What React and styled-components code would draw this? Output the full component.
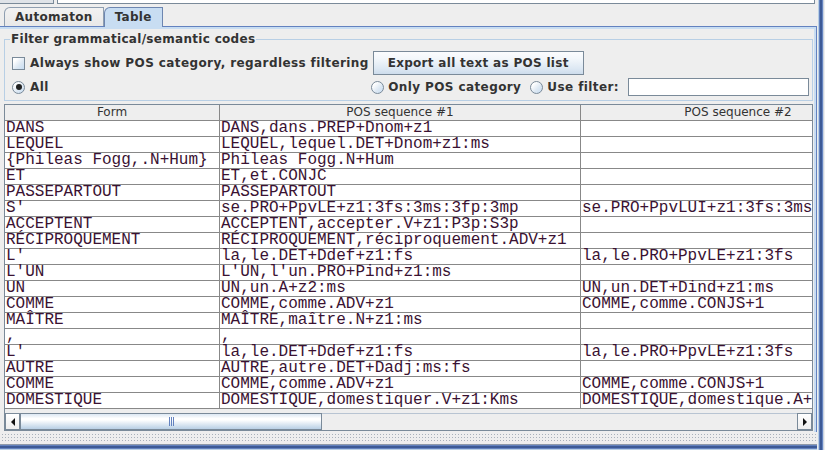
import React from 'react'
import styled, { createGlobalStyle } from 'styled-components'

const GlobalStyle = createGlobalStyle`
  html, body {
    margin: 0;
    padding: 0;
    background: #eeeeee;
  }
  body {
    font-family: "DejaVu Sans", "Liberation Sans", sans-serif;
    font-size: 12px;
    color: #333333;
  }
`

const rows = [
  ['DANS', 'DANS,dans.PREP+Dnom+z1', ''],
  ['LEQUEL', 'LEQUEL,lequel.DET+Dnom+z1:ms', ''],
  ['{Phileas Fogg,.N+Hum}', 'Phileas Fogg.N+Hum', ''],
  ['ET', 'ET,et.CONJC', ''],
  ['PASSEPARTOUT', 'PASSEPARTOUT', ''],
  ["S'", 'se.PRO+PpvLE+z1:3fs:3ms:3fp:3mp', 'se.PRO+PpvLUI+z1:3fs:3ms:3fp:3mp'],
  ['ACCEPTENT', 'ACCEPTENT,accepter.V+z1:P3p:S3p', ''],
  ['RÉCIPROQUEMENT', 'RÉCIPROQUEMENT,réciproquement.ADV+z1', ''],
  ["L'", 'la,le.DET+Ddef+z1:fs', 'la,le.PRO+PpvLE+z1:3fs'],
  ["L'UN", "L'UN,l'un.PRO+Pind+z1:ms", ''],
  ['UN', 'UN,un.A+z2:ms', 'UN,un.DET+Dind+z1:ms'],
  ['COMME', 'COMME,comme.ADV+z1', 'COMME,comme.CONJS+1'],
  ['MAÎTRE', 'MAÎTRE,maître.N+z1:ms', ''],
  [',', ',', ''],
  ["L'", 'la,le.DET+Ddef+z1:fs', 'la,le.PRO+PpvLE+z1:3fs'],
  ['AUTRE', 'AUTRE,autre.DET+Dadj:ms:fs', ''],
  ['COMME', 'COMME,comme.ADV+z1', 'COMME,comme.CONJS+1'],
  ['DOMESTIQUE', 'DOMESTIQUE,domestiquer.V+z1:Kms', 'DOMESTIQUE,domestique.A+z1:ms'],
]

const columns = [
  { title: 'Form', width: 215 },
  { title: 'POS sequence #1', width: 361 },
  { title: 'POS sequence #2', width: 315 },
]

const Window = styled.div`
  width: 825px;
  height: 450px;
  display: flex;
  overflow: hidden;
  background: #eeeeee;
`

const Main = styled.div`
  width: 817px;
  display: flex;
  flex-direction: column;
`

const RightFrame = styled.div`
  width: 8px;
  background: linear-gradient(
    to right,
    #eeeeee 0 1px,
    #b8cfe5 1px 2px,
    #6382bf 2px 3px,
    #3d5a96 3px 5px,
    #6382bf 5px 6px,
    #c8d3e2 6px 7px,
    #eeeeee 7px 8px
  );
`

const TopStrip = styled.div`
  height: 5px;
  display: flex;
  gap: 3px;
`

const TopStub = styled.div`
  width: 53px;
  height: 3px;
  background: #dfe3e8;
  border-right: 1px solid #7a8a99;
  border-bottom: 1px solid #7a8a99;
`

const TopField = styled.div`
  flex: 1;
  height: 3px;
  margin-right: 2px;
  background: #ffffff;
  border: 1px solid #7a8a99;
  border-top: none;
`

const TabBar = styled.div`
  height: 21px;
  display: flex;
  align-items: flex-end;
  padding-left: 4px;
`

const Tab = styled.div`
  position: relative;
  z-index: 1;
  box-sizing: border-box;
  height: ${p => (p.$selected ? 20 : 19)}px;
  margin-bottom: ${p => (p.$selected ? -1 : 0)}px;
  padding: 0 10px 1px;
  display: flex;
  align-items: center;
  font-weight: bold;
  letter-spacing: 0.3px;
  color: #333333;
  background: ${p => (p.$selected ? '#c8ddf2' : 'linear-gradient(#f2f2f2, #e8e8e8)')};
  border: 1px solid ${p => (p.$selected ? '#6d86b0' : '#8e9eb0')};
  border-bottom: none;
  border-top-left-radius: 6px;
`

const TabContent = styled.div`
  flex: 1;
  min-height: 0;
  display: flex;
  flex-direction: column;
  gap: 3px;
  padding: 5px 3px 1px 4px;
  border-top: 1px solid #6382bf;
  border-right: 1px solid #6382bf;
  box-shadow: inset 0 2px 0 #c8ddf2, inset -2px 0 0 #c8ddf2;
`

const Group = styled.fieldset`
  margin: 0;
  min-width: 0;
  padding: 5px 3px 4px 7px;
  border: 1px solid #b8cfe5;
  display: flex;
  flex-direction: column;
  gap: 3px;
`

const Legend = styled.legend`
  padding: 0 1px;
  margin-left: -2px;
  line-height: 14px;
  font-weight: bold;
  letter-spacing: 0.3px;
  color: #333333;
`

const Row = styled.div`
  height: ${p => p.$h}px;
  display: flex;
  align-items: center;
`

const Choice = styled.label`
  display: flex;
  align-items: center;
  gap: ${p => (p.$wide ? 5 : 4)}px;
  font-weight: bold;
  letter-spacing: 0.4px;
  color: #333333;
  white-space: nowrap;
`

const CheckBox = styled.span`
  box-sizing: border-box;
  width: 13px;
  height: 13px;
  border: 1px solid #7a8a99;
  background: linear-gradient(135deg, #ffffff 20%, #dde8f3 60%, #c8ddf2);
`

const Radio = styled.span`
  box-sizing: border-box;
  width: 13px;
  height: 13px;
  border-radius: 50%;
  border: 1px solid #7a8a99;
  background: linear-gradient(135deg, #ffffff 20%, #dde8f3 60%, #c8ddf2);
  display: flex;
  align-items: center;
  justify-content: center;
  &::after {
    content: '';
    width: 6px;
    height: 6px;
    border-radius: 50%;
    background: ${p => (p.$checked ? '#222222' : 'transparent')};
  }
`

const Button = styled.button`
  width: 211px;
  height: 24px;
  margin-left: 4px;
  padding: 0;
  font-family: inherit;
  font-size: 12px;
  font-weight: bold;
  letter-spacing: 0.3px;
  color: #333333;
  border: 1px solid #7a8a99;
  background: linear-gradient(#fbfcfe 0%, #f3f7fb 30%, #dde8f3 75%, #cddcec 100%);
`

const RightGroup = styled.div`
  margin-left: auto;
  display: flex;
  align-items: center;
  gap: 9px;
`

const TextField = styled.div`
  box-sizing: border-box;
  width: 181px;
  height: 18px;
  background: #ffffff;
  border: 1px solid #7a8a99;
`

const ScrollPane = styled.div`
  flex: 1;
  min-height: 0;
  display: flex;
  flex-direction: column;
  border: 1px solid #7a8a99;
`

const Viewport = styled.div`
  flex: 1;
  min-height: 0;
  overflow: hidden;
  background: #eeeeee;
`

const Grid = styled.table`
  border-collapse: separate;
  border-spacing: 0;
  table-layout: fixed;
  width: ${p => p.$w}px;
`

const Col = styled.col`
  width: ${p => p.$w}px;
`

const HeadCell = styled.th`
  height: 15px;
  padding: 0;
  line-height: 15px;
  font-weight: normal;
  font-size: 12px;
  color: #333333;
  text-align: center;
  background: #eeeeee;
  border-right: 1px solid #888888;
  border-bottom: 1px solid #888888;
  white-space: nowrap;
`

const Cell = styled.td`
  height: 15px;
  padding: 0 0 0 1px;
  line-height: 15px;
  vertical-align: top;
  font-family: "Liberation Mono", "DejaVu Sans Mono", monospace;
  font-size: 16px;
  color: #3a1232;
  background: #ffffff;
  border-right: 1px solid #888888;
  border-bottom: 1px solid #888888;
  white-space: pre;
`

const HScroll = styled.div`
  height: 17px;
  display: flex;
  background: #eeeeee;
`

const ArrowButton = styled.div`
  box-sizing: border-box;
  width: 15px;
  display: flex;
  align-items: center;
  justify-content: center;
  border: 1px solid #7a8a99;
  background: linear-gradient(#ffffff, #eeeeee);
  &::after {
    content: '';
    width: 0;
    height: 0;
    border-top: 4px solid transparent;
    border-bottom: 4px solid transparent;
    ${p => (p.$dir === 'left' ? 'border-right: 4px solid #111111;' : 'border-left: 4px solid #111111;')}
  }
`

const Track = styled.div`
  flex: 1;
  display: flex;
  border-top: 1px solid #b8c4d2;
  background: #eeeeee;
`

const Thumb = styled.div`
  box-sizing: border-box;
  width: 302px;
  display: flex;
  align-items: center;
  justify-content: center;
  gap: 1px;
  margin-top: -1px;
  border: 1px solid #7a8a99;
  background: linear-gradient(#dde8f3 0%, #ffffff 30%, #ffffff 40%, #b8cfe5 100%);
`

const Grip = styled.span`
  width: 1px;
  height: 9px;
  background: #6382bf;
`

const Bumps = styled.div`
  height: 11px;
  background-color: #eeeeee;
  background-image: radial-gradient(circle, #a9b1bb 0.6px, transparent 0.9px);
  background-size: 3px 3px;
  background-position: 1px 1px;
`

const BottomFrame = styled.div`
  height: 7px;
  background: linear-gradient(
    to bottom,
    #eeeeee 0 1px,
    #8e99a8 1px 2px,
    #6382bf 2px 3px,
    #3d5a96 3px 5px,
    #6382bf 5px 6px,
    #b8cfe5 6px 7px
  );
`

const tableWidth = columns.reduce((s, c) => s + c.width, 0)

const App = () => {
  return (
    <>
      <GlobalStyle />
      <Window>
        <Main>
          <TopStrip>
            <TopStub />
            <TopField />
          </TopStrip>
          <TabBar>
            <Tab>Automaton</Tab>
            <Tab $selected>Table</Tab>
          </TabBar>
          <TabContent>
            <Group>
              <Legend>Filter grammatical/semantic codes</Legend>
              <Row $h={24}>
                <Choice $wide>
                  <CheckBox />
                  Always show POS category, regardless filtering
                </Choice>
                <Button>Export all text as POS list</Button>
              </Row>
              <Row $h={18}>
                <Choice $wide>
                  <Radio $checked />
                  All
                </Choice>
                <RightGroup>
                  <Choice>
                    <Radio />
                    Only POS category
                  </Choice>
                  <Choice>
                    <Radio />
                    Use filter:
                  </Choice>
                  <TextField />
                </RightGroup>
              </Row>
            </Group>
            <ScrollPane>
              <Viewport>
                <Grid $w={tableWidth}>
                  <colgroup>
                    {columns.map(c => (
                      <Col key={c.title} $w={c.width} />
                    ))}
                  </colgroup>
                  <thead>
                    <tr>
                      {columns.map(c => (
                        <HeadCell key={c.title}>{c.title}</HeadCell>
                      ))}
                    </tr>
                  </thead>
                  <tbody>
                    {rows.map((r, i) => (
                      <tr key={i}>
                        {r.map((v, j) => (
                          <Cell key={j}>{v}</Cell>
                        ))}
                      </tr>
                    ))}
                  </tbody>
                </Grid>
              </Viewport>
              <HScroll>
                <ArrowButton $dir="left" />
                <Track>
                  <Thumb>
                    <Grip />
                    <Grip />
                    <Grip />
                  </Thumb>
                </Track>
                <ArrowButton $dir="right" />
              </HScroll>
            </ScrollPane>
          </TabContent>
          <Bumps />
          <BottomFrame />
        </Main>
        <RightFrame />
      </Window>
    </>
  )
}

export default App
